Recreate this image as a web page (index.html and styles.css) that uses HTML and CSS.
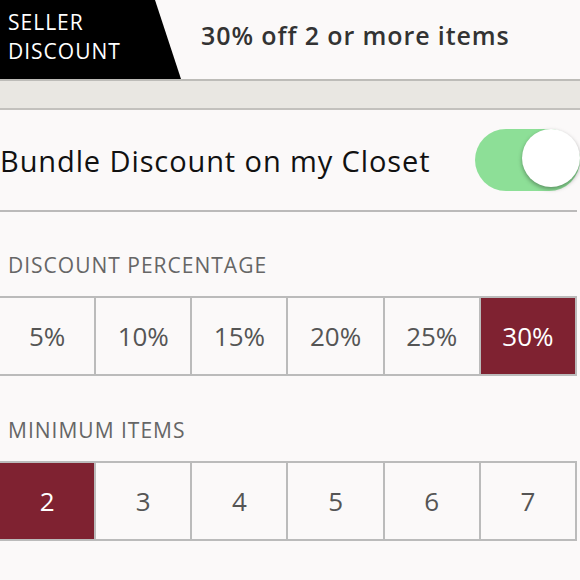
FILE: index.html
```html
<!DOCTYPE html>
<html>
<head>
<meta charset="utf-8">
<link rel="stylesheet" href="styles.css">
</head>
<body>
<div class="page">
  <header class="header">
    <div class="badge">SELLER<br>DISCOUNT</div>
    <div class="headline">30% off 2 or more items</div>
  </header>
  <div class="strip"></div>
  <div class="toggle-row">
    <span class="toggle-label">Bundle Discount on my Closet</span>
    <span class="switch"><span class="knob"></span></span>
  </div>
  <div class="section-label">DISCOUNT PERCENTAGE</div>
  <div class="options">
    <div class="opt">5%</div>
    <div class="opt">10%</div>
    <div class="opt">15%</div>
    <div class="opt">20%</div>
    <div class="opt">25%</div>
    <div class="opt selected">30%</div>
  </div>
  <div class="section-label second">MINIMUM ITEMS</div>
  <div class="options">
    <div class="opt selected">2</div>
    <div class="opt">3</div>
    <div class="opt">4</div>
    <div class="opt">5</div>
    <div class="opt">6</div>
    <div class="opt">7</div>
  </div>
</div>
</body>
</html>
```

FILE: styles.css
```css
html, body {
  margin: 0;
  padding: 0;
  background: #fbf9f9;
}
body {
  font-family: "Open Sans", "Liberation Sans", sans-serif;
  width: 580px;
  height: 580px;
  overflow: hidden;
}
.page {
  display: flex;
  flex-direction: column;
}
.header {
  display: flex;
  align-items: center;
  height: 79px;
  border-bottom: 2px solid #bdbcb8;
}
.badge {
  width: 181px;
  height: 79px;
  box-sizing: border-box;
  background: #000;
  color: #fff;
  clip-path: polygon(0 0, 155px 0, 181px 100%, 0 100%);
  padding: 8px 0 0 8px;
  font-size: 21px;
  line-height: 29px;
  letter-spacing: 1px;
}
.headline {
  padding: 0 0 10px 20px;
  font-size: 25px;
  font-weight: 600;
  letter-spacing: 0.9px;
  color: #333;
}
.strip {
  height: 27px;
  background: #e9e7e2;
  border-bottom: 2px solid #c3c1bd;
}
.toggle-row {
  display: flex;
  align-items: center;
  justify-content: space-between;
  height: 100px;
  margin-right: 3px;
  border-bottom: 2px solid #bbbaba;
}
.toggle-label {
  font-size: 29px;
  letter-spacing: 0.9px;
  color: #111;
}
.switch {
  position: relative;
  display: block;
  width: 105px;
  height: 62px;
  border-radius: 31px;
  background: #8ddf97;
  margin-right: -3px;
  margin-top: 0;
}
.knob {
  position: absolute;
  right: 0;
  top: 0;
  width: 58px;
  height: 58px;
  border-radius: 50%;
  background: #fff;
  box-shadow: 0 2px 4px rgba(0, 0, 0, 0.35);
}
.section-label {
  padding: 39px 0 0 8px;
  height: 45px;
  box-sizing: content-box;
  font-size: 21px;
  letter-spacing: 1px;
  color: #666;
}
.section-label.second {
  padding-top: 40px;
  height: 45px;
}
.options {
  display: grid;
  grid-template-columns: repeat(6, 1fr);
  width: 577px;
  height: 80px;
  border-top: 2px solid #bbb;
  border-bottom: 2px solid #bbb;
  box-sizing: border-box;
}
.opt {
  display: flex;
  align-items: center;
  justify-content: center;
  border-right: 2px solid #bbb;
  font-size: 26px;
  color: #555;
}
.opt.selected {
  background: #7f2231;
  color: #fff;
}
```
